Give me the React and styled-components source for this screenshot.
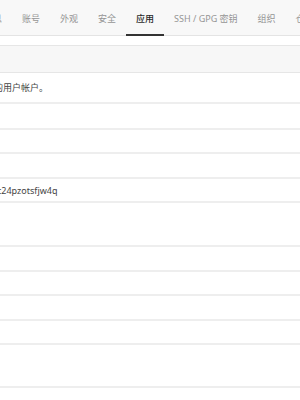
import React from 'react'
import styled, { createGlobalStyle } from 'styled-components'

const GlobalStyle = createGlobalStyle`
  html, body {
    margin: 0;
    padding: 0;
    background: #fff;
    overflow: hidden;
  }
  body {
    font-family: "Noto Sans", "Noto Sans CJK SC", sans-serif;
    color: #333;
  }
`

const Page = styled.div`
  width: 300px;
  height: 400px;
  overflow: hidden;
`

const TabBar = styled.div`
  display: flex;
  height: 35px;
  margin-left: -44px;
  background: #f8f8f8;
  border-bottom: 1px solid #e4e4e4;
  white-space: nowrap;
`

const Tab = styled.div`
  display: flex;
  align-items: center;
  padding: 2px 10px 0;
  font-size: 9px;
  color: ${p => (p.$active ? '#2a2a2a' : '#959595')};
  font-weight: ${p => (p.$active ? 500 : 400)};
  border-bottom: 2px solid ${p => (p.$active ? '#333' : 'transparent')};
  margin-bottom: -1px;
`

const Gap = styled.div`
  height: 9px;
`

const Header = styled.div`
  height: 26px;
  background: #f7f7f7;
  border-top: 1px solid #e6e6e6;
  border-bottom: 1px solid #e6e6e6;
`

const List = styled.div`
  display: flex;
  flex-direction: column;
`

const Row = styled.div`
  display: flex;
  align-items: center;
  height: ${p => p.$h}px;
  border-bottom: 2px solid #eeeeee;
  box-sizing: border-box;
  font-size: 9px;
  color: #444;
  white-space: nowrap;
`

const Text = styled.span`
  margin-left: ${p => p.$shift}px;
`

const tabs = ['个人信息', '账号', '外观', '安全', '应用', 'SSH / GPG 密钥', '组织', '仓库']

const rows = [
  { h: 31, text: '可以访问您的用户帐户。', shift: -51 },
  { h: 26 },
  { h: 24 },
  { h: 25 },
  { h: 24, text: 'c24pzotsfjw4q', shift: -3 },
  { h: 44 },
  { h: 25 },
  { h: 24 },
  { h: 25 },
  { h: 24 },
  { h: 43 },
  { h: 25 },
]

export default function App() {
  return (
    <Page>
      <GlobalStyle />
      <TabBar>
        {tabs.map(t => (
          <Tab key={t} $active={t === '应用'}>{t}</Tab>
        ))}
      </TabBar>
      <Gap />
      <Header />
      <List>
        {rows.map((r, i) => (
          <Row key={i} $h={r.h}>
            {r.text && <Text $shift={r.shift}>{r.text}</Text>}
          </Row>
        ))}
      </List>
    </Page>
  )
}
